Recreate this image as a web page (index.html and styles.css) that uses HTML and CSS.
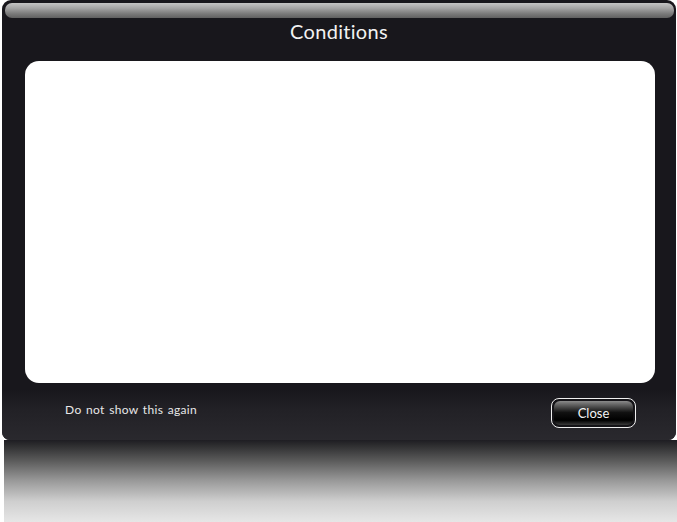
FILE: index.html
```html
<!DOCTYPE html>
<html>
<head>
<meta charset="utf-8">
<link rel="stylesheet" href="styles.css">
</head>
<body>
<div class="window">
  <div class="topbar"></div>
  <h1 class="title">Conditions</h1>
  <div class="content"></div>
  <div class="footer">
    <span class="dont-show">Do not show this again</span>
    <div class="btn-ring"><button class="btn">Close</button></div>
  </div>
</div>
<div class="reflection"></div>
</body>
</html>
```
FILE: styles.css
```css
html, body {
  margin: 0;
  padding: 0;
  background: #ffffff;
  width: 677px;
  height: 522px;
  overflow: hidden;
  font-family: "Lato", "Open Sans", sans-serif;
}
.window {
  margin-left: 2px;
  width: 674px;
  height: 440px;
  background: #18171c;
  border-radius: 9px 9px 8px 8px;
  display: flex;
  flex-direction: column;
  box-sizing: border-box;
  padding-top: 3px;
  position: relative;
}
.topbar {
  margin: 0 2px 0 3px;
  height: 15px;
  border-radius: 7px;
  background: linear-gradient(#c4c4c4 0%, #a4a4a4 35%, #7c7c7c 70%, #606060 100%);
}
.title {
  margin: 0;
  height: 43px;
  line-height: 27px;
  text-align: center;
  color: #f2f2f2;
  font-size: 20px;
  font-weight: 400;
  letter-spacing: 0.3px;
}
.content {
  margin: 0 21px 0 23px;
  height: 322px;
  background: #ffffff;
  border-radius: 14px;
}
.footer {
  flex: 1;
  margin-top: 7px;
  background: linear-gradient(#18171c 0%, #222126 40%, #2a292e 100%);
  border-radius: 0 0 8px 8px;
  display: flex;
  align-items: flex-start;
  justify-content: space-between;
  padding: 0 40px 0 63px;
}
.dont-show {
  margin-top: 12px;
  color: #e8e8e8;
  font-size: 12px;
  letter-spacing: 0.35px;
  word-spacing: 1px;
}
.btn-ring {
  margin-top: 8px;
  width: 85px;
  height: 30px;
  box-sizing: border-box;
  border: 1.5px solid #f0f0f0;
  border-radius: 8px;
  padding: 2px;
  background: #141317;
}
.btn {
  display: block;
  width: 100%;
  height: 100%;
  border: none;
  border-radius: 6px;
  background: linear-gradient(#8a8a8a 0%, #4a4a4a 25%, #111 48%, #000 80%, #3a3a3a 100%);
  color: #f4f4f4;
  font-family: "Lato", "Open Sans", sans-serif;
  font-size: 13px;
  padding: 0;
  line-height: 22px;
}
.reflection {
  margin-left: 4px;
  width: 673px;
  height: 82px;
  background: linear-gradient(#1e1d22 0%, #2c2c2e 6%, #5a5a5a 25%, #9a9a9a 50%, #cfcfcf 75%, #e6e6e6 100%);
}
```
